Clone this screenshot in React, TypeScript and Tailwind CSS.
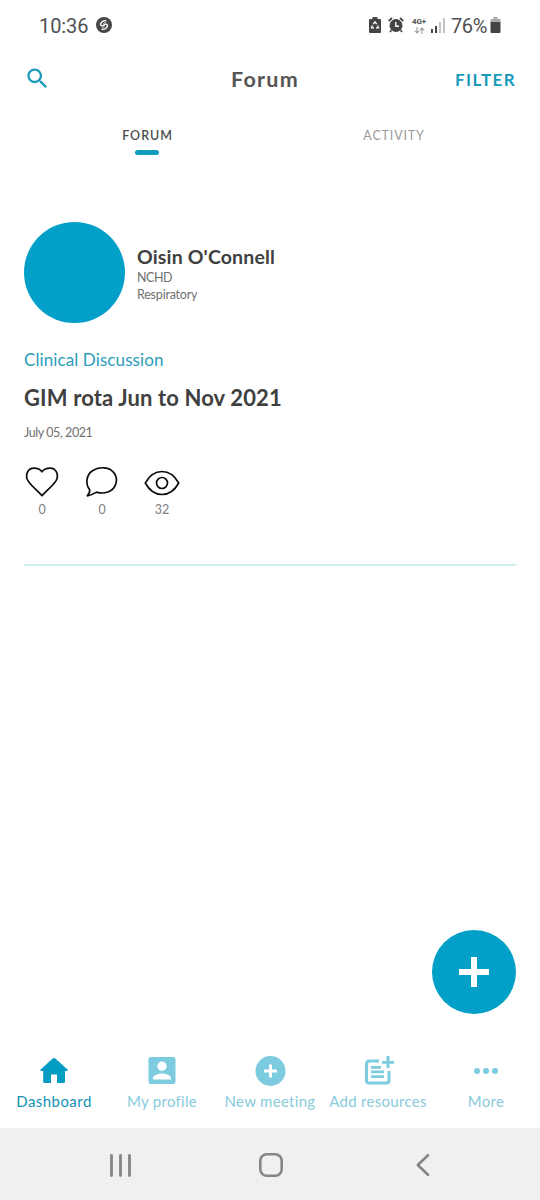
import type { ReactNode } from "react";

function StatusBar() {
  return (
    <header className="flex h-[52px] items-center pl-[39px] pr-[38px] font-[Roboto,sans-serif] text-[20px] leading-[52px] text-[#505050]">
      <span className="w-[57px] tracking-[-0.1px]">10:36</span>
      <svg className="-mt-[2px] size-4" viewBox="0 0 16 16" fill="none">
        <circle cx="8" cy="8" r="8" fill="#464646" />
        <path d="M9.7 3.6 C7.5 3 3.4 6.2 4.8 8.2 C5.7 9.5 7.2 8.7 8.2 7.8 M6.3 12.3 C8.5 13 12.6 9.8 11.2 7.8 C10.3 6.5 8.8 7.3 7.8 8.2" stroke="#fff" strokeWidth="1.3" strokeLinecap="round" />
        <path d="M7.5 6.7 L10 4.8 M8.5 9.3 L6 11.2" stroke="#fff" strokeWidth="0.8" strokeLinecap="round" />
      </svg>
      <div className="ml-auto flex items-center">
        <svg className="-mt-[2px] h-4 w-3" viewBox="0 0 12 16" fill="none">
          <path d="M3.5 0h5v2H11a1 1 0 0 1 1 1v12a1 1 0 0 1-1 1H1a1 1 0 0 1-1-1V3a1 1 0 0 1 1-1h2.500Z" fill="#444" />
          <path d="M4.300 7.200 6 4.900 7.700 7.200M8.500 8.400 9.500 10.800H7M5 10.800H2.500L3.500 8.400" stroke="#fff" strokeWidth="1.300" />
        </svg>
        <svg className="-mt-[2px] ml-[7px] size-4" viewBox="0 0 16 16" fill="none" stroke="#444">
          <circle cx="8" cy="8.500" r="6" fill="#444" />
          <path d="M.7 4 4 1M15.300 4 12 1" strokeWidth="1.700" />
          <path d="m3.500 13-1.500 2M12.500 13l1.500 2" strokeWidth="1.600" />
          <path d="M7.800 5v4.300H11" stroke="#fff" strokeWidth="1.400" />
        </svg>
        <div className="ml-[7px] flex h-4 w-4 flex-col items-center">
          <span className="text-[8px] font-bold leading-[8px] tracking-[-0.1px]">4G+</span>
          <svg className="mt-px h-[7px] w-[11px]" viewBox="0 0 11 7" fill="none" stroke="#a4a4a4" strokeWidth="1.200">
            <path d="M3 0v6M.8 3.800 3 6l2.200-2.200M8 7V1M5.800 3.200 8 1l2.200 2.200" />
          </svg>
        </div>
        <svg className="-mt-[2px] ml-[4px] h-[15px] w-[14px]" viewBox="0 0 14 15">
          <path d="M0 11h2v4H0ZM4 8h2v7H4Z" fill="#444" />
          <path d="M8 4h2v11H8ZM12 0h2v15h-2Z" fill="#c4c4c4" />
        </svg>
        <span className="ml-[6px] w-[39px] tracking-[-0.4px]">76%</span>
        <svg className="-mt-[2px] mr-px h-4 w-[11px]" viewBox="0 0 10 16">
          <path d="M3 0h4v2h3v4H0V2h3Z" fill="#aaa" />
          <path d="M0 5h10v10a1 1 0 0 1-1 1H1a1 1 0 0 1-1-1Z" fill="#444" />
        </svg>
      </div>
    </header>
  );
}

function Stat({ value, children }: { value: number; children: ReactNode }) {
  return (
    <div className="flex w-9 flex-col items-center">
      <svg className="h-8 w-9" viewBox="0 0 36 32" fill="none" stroke="#0c0c0c" strokeWidth="1.700" strokeLinejoin="round">
        {children}
      </svg>
      <span className="mt-1 text-[12.500px] leading-4 text-[#808080]">{value}</span>
    </div>
  );
}

function NavItem({ label, active = false, children }: { label: string; active?: boolean; children: ReactNode }) {
  return (
    <button className={`flex w-[108px] flex-col items-center ${active ? "text-[#039dc4]" : "text-[#7ccbdf]"}`}>
      <svg className="h-8 w-8" viewBox="0 0 32 32" fill="currentColor">
        {children}
      </svg>
      <span className={`mt-1 whitespace-nowrap text-[15px] leading-5 ${active ? "tracking-[0.450px] text-[#1192b4]" : "tracking-[0.3px] text-[#88cbdc]"}`}>{label}</span>
    </button>
  );
}

export default function App() {
  return (
    <div className="flex h-[1200px] w-[540px] flex-col overflow-hidden bg-white font-[Lato,sans-serif]">
      <StatusBar />
      <div className="grid h-[54px] grid-cols-3 items-center px-6 text-[#555]">
        <button className="-mt-px">
          <svg className="size-[27px]" viewBox="0 0 24 24" fill="#189ab9">
            <path d="M15.500 14h-.79l-.28-.27C15.410 12.590 16 11.110 16 9.500 16 5.910 13.090 3 9.500 3S3 5.910 3 9.500 5.910 16 9.500 16c1.610 0 3.090-.59 4.230-1.570l.27.28v.79l5 4.990L20.490 19l-4.990-5zm-6 0C7.010 14 5 11.990 5 9.500S7.010 5 9.500 5 14 7.010 14 9.500 11.990 14 9.500 14z" />
          </svg>
        </button>
        <h1 className="-ml-[10px] text-center text-[21.500px] font-bold leading-7 tracking-[1.300px]">Forum</h1>
        <button className="mt-px text-right text-[17px] font-bold leading-6 tracking-[1.350px] text-[#189ab9]">FILTER</button>
      </div>
      <nav className="grid h-[60px] grid-cols-2 px-6 pt-[21px] text-[12.500px] leading-4">
        <div className="flex flex-col items-center">
          <span className="mt-px pl-px font-semibold tracking-[0.950px] text-[#4d4d4d]">FORUM</span>
          <span className="mt-[6px] h-[5px] w-6 rounded-full bg-[#109bbd]" />
        </div>
        <div className="mt-px pl-[2px] text-center tracking-[0.850px] text-[#999]">ACTIVITY</div>
      </nav>
      <main className="flex grow flex-col px-6 pt-14">
        <article className="border-b-2 border-b-[#d0eeed]">
          <div className="flex h-[100px] items-center">
            <div className="size-[101px] shrink-0 rounded-full bg-[#029fc9]" />
            <div className="ml-3 mt-1">
              <h2 className="text-[19.500px] font-bold leading-6 tracking-[0.150px] text-[#404040]">Oisin O'Connell</h2>
              <p className="text-[12.500px] leading-[17px] tracking-[-0.450px] text-[#707070]">NCHD</p>
              <p className="text-[12.500px] leading-[17px] tracking-[-0.200px] text-[#707070]">Respiratory</p>
            </div>
          </div>
          <p className="mt-[26px] text-[17px] leading-6 tracking-[0.100px] text-[#2a9dbb]">Clinical Discussion</p>
          <h3 className="mt-[12px] text-[22px] font-bold leading-7 tracking-[0.130px] text-[#404040]">GIM rota Jun to Nov 2021</h3>
          <p className="mt-[13px] text-[12.500px] leading-4 tracking-[-0.420px] text-[#707070]">July 05, 2021</p>
          <div className="mt-[25px] flex h-[98px] gap-6">
            <Stat value={0}>
              <path d="M18 29.700C14 25.500 8 20 5 16.200C0 10 3.500 2.200 10 2.200C13.800 2.200 16.500 3.900 18 5.800C19.500 3.900 22.200 2.200 26 2.200C32.500 2.200 36 10 31 16.200C28 20 22 25.500 18 29.700Z" />
            </Stat>
            <Stat value={0}>
              <path d="M3.300 29.800C5.200 27.800 6.200 25.800 5.600 23.500C1 18 2.500 9 8 5C15 .2 26 .5 30.500 7.500C35 15 31 23.500 24 26C19.500 27.600 15.500 27 12.500 26.100C9.500 28 7 29.300 3.300 29.800Z" />
            </Stat>
            <Stat value={32}>
              <path d="M1.300 17C5.500 9.300 11 5.500 18 5.500S30.500 9.300 34.700 17C30.500 24.700 25 28.500 18 28.500S5.500 24.700 1.300 17Z" />
              <circle cx="18" cy="17" r="5.500" />
            </Stat>
          </div>
        </article>
      </main>
      <div className="flex justify-end px-6">
        <button className="flex size-[84px] items-center justify-center rounded-full bg-[#029fc9]">
          <svg className="size-[30px]" viewBox="0 0 30 30" fill="none" stroke="#fff" strokeWidth="6">
            <path d="M15 0v30M0 15h30" />
          </svg>
        </button>
      </div>
      <nav className="flex h-[114px] items-start pt-[41px]">
        <NavItem label="Dashboard" active>
          <path d="M14.700 3.500a2 2 0 0 1 2.600 0L29.500 14.500c.8.700.4 1.500-.6 1.500H27v10.500A1.500 1.500 0 0 1 25.500 28H19V19.500h-6V28H6.700a1.500 1.500 0 0 1-1.500-1.500V16h-2c-1 0-1.400-.8-.6-1.500Z" />
        </NavItem>
        <NavItem label="My profile">
          <path fillRule="evenodd" d="M5 2h22a2.500 2.500 0 0 1 2.500 2.500v22a2.500 2.500 0 0 1-2.500 2.500H5a2.500 2.500 0 0 1-2.500-2.500v-22A2.500 2.500 0 0 1 5 2Zm11 4.500a4.700 4.700 0 1 0 0 9.400a4.700 4.700 0 0 0 0-9.400ZM7 24.500h18V23c0-3-6-4.600-9-4.600S7 20 7 23Z" />
        </NavItem>
        <NavItem label="New meeting">
          <circle cx="16.500" cy="16" r="15" />
          <path d="M15 9.500h3v5h5v3h-5v5h-3v-5h-5v-3h5Z" fill="#fff" />
        </NavItem>
        <NavItem label="Add resources">
          <path d="M17 6H7.500Q4.500 6 4.500 9v16.500q0 2.500 2.500 2.500h17.500q2.500 0 2.500-2.500V16" fill="none" stroke="currentColor" strokeWidth="3" />
          <path d="M9 11h10v2.700H9ZM9 15.600h13v2.700H9ZM9 20.200h13v2.700H9ZM24.500 1h3v5H32v2.700h-4.500V13h-3V8.700H20V6h4.500Z" />
        </NavItem>
        <NavItem label="More">
          <circle cx="7" cy="16" r="3" />
          <circle cx="16" cy="16" r="3" />
          <circle cx="25" cy="16" r="3" />
        </NavItem>
      </nav>
      <footer className="flex h-[72px] items-center bg-[#f0f0f0] pl-[108px] pt-[2px] text-[#858585]">
        <svg className="h-6 w-6" viewBox="0 0 24 24" fill="none" stroke="currentColor" strokeWidth="2.800" strokeLinecap="round">
          <path d="M3.500 2.500v20M12.500 2.500v20M21.500 2.500v20" />
        </svg>
        <svg className="ml-[127px] h-6 w-6" viewBox="0 0 24 24" fill="none" stroke="currentColor" strokeWidth="2.600">
          <rect x="1.300" y="1.300" width="21.400" height="21.400" rx="6.500" />
        </svg>
        <svg className="ml-[127px] h-6 w-6" viewBox="0 0 24 24" fill="none" stroke="currentColor" strokeWidth="2.600" strokeLinecap="round" strokeLinejoin="round">
          <path d="M18 2.200 7.800 12 18 21.800" />
        </svg>
      </footer>
    </div>
  );
}
